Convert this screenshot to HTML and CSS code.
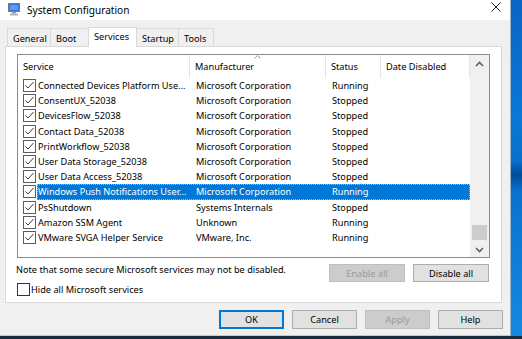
FILE: index.html
```html
<!DOCTYPE html>
<html lang="en">

<head>
  <meta charset="UTF-8">
  <title>System Configuration</title>
  <link rel="stylesheet" href="styles.css">
</head>

<body>
  <div class="screen">
    <div class="main">
      <div class="window">
        <div class="titlebar">
          <svg class="app-icon" width="14" height="14" viewBox="0 0 14 14">
            <rect x="1.5" y="1.5" width="11" height="8" fill="#3d74d9" stroke="#6f7c8c"/>
            <rect x="3" y="3" width="8" height="5" fill="#5b9af0"/>
            <rect x="5" y="10" width="4" height="1.5" fill="#8a96a3"/>
            <rect x="3" y="11.5" width="8" height="2" fill="#a9b3bd"/>
          </svg>
          <span class="title">System Configuration</span>
          <svg class="close" width="10" height="10" viewBox="0 0 10 10">
            <path d="M0.5 0.5 L9.5 9.5 M9.5 0.5 L0.5 9.5" stroke="#222" stroke-width="1"/>
          </svg>
        </div>

        <div class="content">
          <div class="tabs">
            <div class="tab">General</div>
            <div class="tab">Boot</div>
            <div class="tab active">Services</div>
            <div class="tab">Startup</div>
            <div class="tab">Tools</div>
          </div>

          <div class="panel">
            <div class="list">
              <div class="table">
                <div class="head">
                  <div class="hcell c-service">Service</div>
                  <div class="hcell c-maker">Manufacturer
                    <svg class="sort" width="7" height="4" viewBox="0 0 7 4"><path d="M0.5 3.5 L3.5 0.5 L6.5 3.5" fill="none" stroke="#999"/></svg>
                  </div>
                  <div class="hcell c-status">Status</div>
                  <div class="hcell c-date">Date Disabled</div>
                </div>
                <div class="rows" id="rows"></div>
              </div>
              <div class="scrollbar">
                <svg class="arrow" width="9" height="6" viewBox="0 0 9 6"><path d="M1 5 L4.5 1.5 L8 5" fill="none" stroke="#606060" stroke-width="1.6"/></svg>
                <div class="track"><div class="thumb"></div></div>
                <svg class="arrow" width="9" height="6" viewBox="0 0 9 6"><path d="M1 1 L4.5 4.5 L8 1" fill="none" stroke="#606060" stroke-width="1.6"/></svg>
              </div>
            </div>

            <div class="actions">
              <span class="note">Note that some secure Microsoft services may not be disabled.</span>
              <button class="btn wide" disabled>Enable all</button>
              <button class="btn wide">Disable all</button>
            </div>

            <label class="hide">
              <span class="box"></span>
              Hide all Microsoft services
            </label>
          </div>

          <div class="footer">
            <button class="btn default">OK</button>
            <button class="btn">Cancel</button>
            <button class="btn" disabled>Apply</button>
            <button class="btn">Help</button>
          </div>
        </div>
      </div>
      <div class="desktop"></div>
    </div>
    <div class="taskbar"></div>
  </div>

  <script>
    const services = [
      ["Connected Devices Platform Use...", "Microsoft Corporation", "Running"],
      ["ConsentUX_52038", "Microsoft Corporation", "Stopped"],
      ["DevicesFlow_52038", "Microsoft Corporation", "Stopped"],
      ["Contact Data_52038", "Microsoft Corporation", "Stopped"],
      ["PrintWorkflow_52038", "Microsoft Corporation", "Stopped"],
      ["User Data Storage_52038", "Microsoft Corporation", "Stopped"],
      ["User Data Access_52038", "Microsoft Corporation", "Stopped"],
      ["Windows Push Notifications User...", "Microsoft Corporation", "Running"],
      ["PsShutdown", "Systems Internals", "Stopped"],
      ["Amazon SSM Agent", "Unknown", "Running"],
      ["VMware SVGA Helper Service", "VMware, Inc.", "Running"]
    ];
    const selected = 7;

    const rows = document.getElementById("rows");
    const check = '<svg width="13" height="13" viewBox="0 0 13 13">' +
      '<rect x="0.5" y="0.5" width="12" height="12" fill="#fff" stroke="#5c5c5c"/>' +
      '<path d="M2.5 6.5 L5 9 L10.5 3" fill="none" stroke="#3a3a3a" stroke-width="1"/></svg>';

    for (let i = 0; i < services.length; i++) {
      const s = services[i];
      const row = document.createElement("div");
      row.className = "row";
      row.innerHTML =
        '<span class="check">' + check + '</span>' +
        '<span class="cells' + (i === selected ? ' selected' : '') + '">' +
        '<span class="c-name">' + s[0] + '</span>' +
        '<span class="c-maker">' + s[1] + '</span>' +
        '<span class="c-status">' + s[2] + '</span>' +
        '<span class="c-date"></span>' +
        '</span>';
      rows.appendChild(row);
    }
  </script>
</body>

</html>
```

FILE: styles.css
```css
* {
  box-sizing: border-box;
}

body {
  margin: 0;
  font-family: "Noto Sans", "Liberation Sans", sans-serif;
  font-size: 9.2px;
  color: #000;
}

.screen {
  width: 522px;
  height: 339px;
  display: flex;
  flex-direction: column;
  overflow: hidden;
}

.main {
  display: flex;
  height: 336px;
}

.window {
  width: 510px;
  height: 336px;
  display: flex;
  flex-direction: column;
  background: #f0f0f0;
  border-bottom: 1px solid #c9c9c9;
}

.desktop {
  flex: 1;
  border-left: 1px solid #9ab4cc;
  background: linear-gradient(to bottom, #0a64c4 0%, #0a78d7 35%, #0a70cc 48%, #004a9a 52%, #0a72d0 57%, #1588e2 100%);
}

.taskbar {
  height: 3px;
  background: #1b2a3a;
}

/* title bar */
.titlebar {
  height: 20px;
  display: flex;
  align-items: center;
  background: #fff;
  padding-left: 7px;
}

.app-icon {
  margin-top: -2px;
}

.title {
  margin-left: 6px;
  font-size: 10.1px;
  margin-top: -1px;
}

.close {
  margin-left: auto;
  margin-right: 9px;
  margin-top: -6px;
}

/* tabs */
.content {
  flex: 1;
  display: flex;
  flex-direction: column;
  padding-top: 7px;
}

.tabs {
  display: flex;
  align-items: flex-end;
  padding-left: 7px;
  height: 19px;
}

.tab {
  height: 18px;
  padding: 0 5px;
  display: flex;
  align-items: center;
  border: 1px solid #d9d9d9;
  border-bottom: none;
  margin-right: -1px;
  background: #f0f0f0;
  padding-top: 1px;
}

.tab:nth-child(1) { width: 44px; }
.tab:nth-child(2) { width: 39px; }
.tab:nth-child(4) { width: 43px; }
.tab:nth-child(5) { width: 36px; }

.tab.active {
  height: 20px;
  width: 49px;
  background: #fff;
  position: relative;
  z-index: 1;
  margin-bottom: -1px;
  padding-top: 0;
  padding-bottom: 2px;
}

.panel {
  height: 257px;
  margin: 0 8px 0 5px;
  background: #fff;
  border: 1px solid #d9d9d9;
  padding: 7px 11px 0 11px;
}

/* list */
.list {
  height: 204px;
  width: 473px;
  border: 1px solid #8c8c8c;
  display: flex;
}

.table {
  width: 452px;
}

.head {
  display: flex;
  height: 23px;
}

.hcell {
  display: flex;
  align-items: center;
  border-right: 1px solid #e5e5e5;
  padding-left: 5px;
  position: relative;
}

.head .c-service { width: 172px; }
.head .c-maker { width: 136px; }
.head .c-status { width: 55px; }
.head .c-date { width: 89px; }

.sort {
  position: absolute;
  top: 0;
  left: 64px;
}

.row {
  display: flex;
  height: 15.2px;
  align-items: center;
}

.check {
  width: 19px;
  padding-left: 5px;
  display: flex;
}

.cells {
  display: flex;
  height: 15.2px;
  align-items: center;
}

.cells span {
  white-space: nowrap;
  overflow: hidden;
}

.c-name { width: 153px; padding-left: 1px; }
.cells .c-maker { width: 136px; padding-left: 6px; }
.cells .c-status { width: 55px; padding-left: 6px; }
.cells .c-date { width: 89px; }

.cells.selected {
  background: #0078d7;
  color: #fff;
  outline: 1px dotted #f7a84a;
  outline-offset: -1px;
}

.scrollbar {
  width: 19px;
  background: #f0f0f0;
  display: flex;
  flex-direction: column;
  align-items: center;
  padding: 6px 0 4px;
}

.track {
  flex: 1;
  width: 100%;
  position: relative;
}

.thumb {
  position: absolute;
  left: 2px;
  right: 2px;
  bottom: 7px;
  height: 15px;
  background: #cdcdcd;
}

/* below list */
.actions {
  display: flex;
  align-items: center;
  margin-top: 6px;
  height: 18px;
}

.note {
  margin-left: -1px;
  margin-right: auto;
  margin-top: -8px;
}

.btn {
  font: inherit;
  color: #000;
  background: #e1e1e1;
  border: 1px solid #adadad;
  padding: 0;
  height: 19px;
  width: 65px;
}

.btn.wide {
  width: 76px;
  height: 18px;
}

.btn.wide + .btn.wide {
  margin-left: 8px;
  margin-right: 1px;
}

.btn:disabled {
  background: #cccccc;
  border-color: #bfbfbf;
  color: #9a9a9a;
}

.btn.default {
  border: 2px solid #0078d7;
}

.hide {
  display: flex;
  align-items: center;
  height: 14px;
}

.box {
  width: 13px;
  height: 13px;
  border: 1px solid #333;
  margin-right: 1px;
}

.footer {
  display: flex;
  justify-content: flex-end;
  gap: 8px;
  padding: 7px 7px 0 0;
}
```
